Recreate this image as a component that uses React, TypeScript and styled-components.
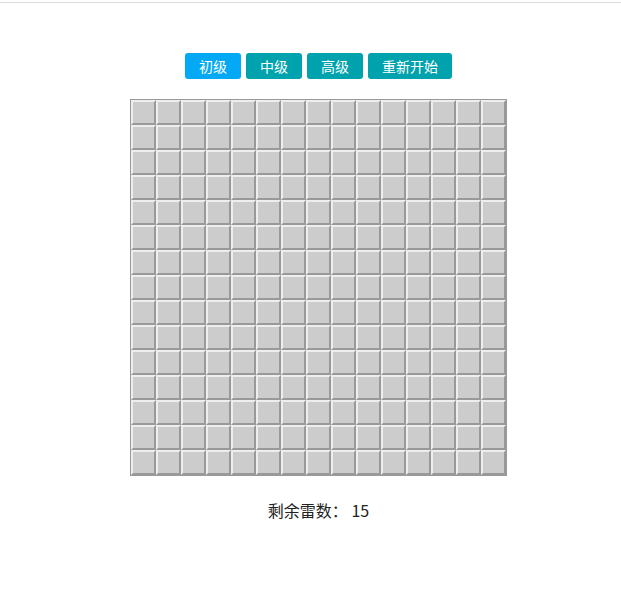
import React, { FC, useState } from 'react';
import styled, { createGlobalStyle } from 'styled-components';

const SIZE = 15;

const GlobalStyle = createGlobalStyle`
  html, body {
    margin: 0;
    padding: 0;
    background: #fff;
    font-family: "Noto Sans CJK SC", "Noto Sans", sans-serif;
  }
`;

type Level = 'easy' | 'mid' | 'hard';

const levels: { key: Level; label: string }[] = [
  { key: 'easy', label: '初级' },
  { key: 'mid', label: '中级' },
  { key: 'hard', label: '高级' },
];

const App: FC = () => {
  const [level, setLevel] = useState<Level>('easy');
  const cells = Array.from({ length: SIZE * SIZE }, (_, i) => i);

  return (
    <>
      <GlobalStyle />
      <TopLine />
      <Page>
        <Toolbar>
          {levels.map((l) => (
            <Button key={l.key} active={level === l.key} onClick={() => setLevel(l.key)}>
              {l.label}
            </Button>
          ))}
          <Button active={false}>重新开始</Button>
        </Toolbar>
        <Board>
          {cells.map((i) => (
            <Cell key={i} />
          ))}
        </Board>
        <Counter>剩余雷数： 15</Counter>
      </Page>
    </>
  );
};

export default App;

const TopLine = styled.div`
  margin-top: 2px;
  height: 1px;
  background: #dcdcdc;
`;

const Page = styled.div`
  display: flex;
  flex-direction: column;
  align-items: center;
  padding-left: 16px;
  padding-top: 50px;
`;

const Toolbar = styled.div`
  display: flex;
  gap: 5px;
  margin-bottom: 20px;
`;

const Button = styled.button<{ active: boolean }>`
  height: 26px;
  padding: 0 14px;
  border: none;
  border-radius: 3px;
  background: ${(p) => (p.active ? '#03a9f4' : '#00a3ad')};
  color: #fff;
  font-family: "Noto Sans CJK SC", sans-serif;
  font-size: 14px;
  line-height: 26px;
  cursor: pointer;
`;

const Board = styled.div`
  display: grid;
  grid-template-columns: repeat(${SIZE}, 25px);
  grid-auto-rows: 25px;
  border: 1px solid #999;
  background: #fff;
`;

const Cell = styled.div`
  box-sizing: border-box;
  background: #ccc;
  border: 2px solid;
  border-color: #eee #999 #999 #eee;
`;

const Counter = styled.div`
  margin-top: 22px;
  font-size: 16px;
  color: #222;
`;
